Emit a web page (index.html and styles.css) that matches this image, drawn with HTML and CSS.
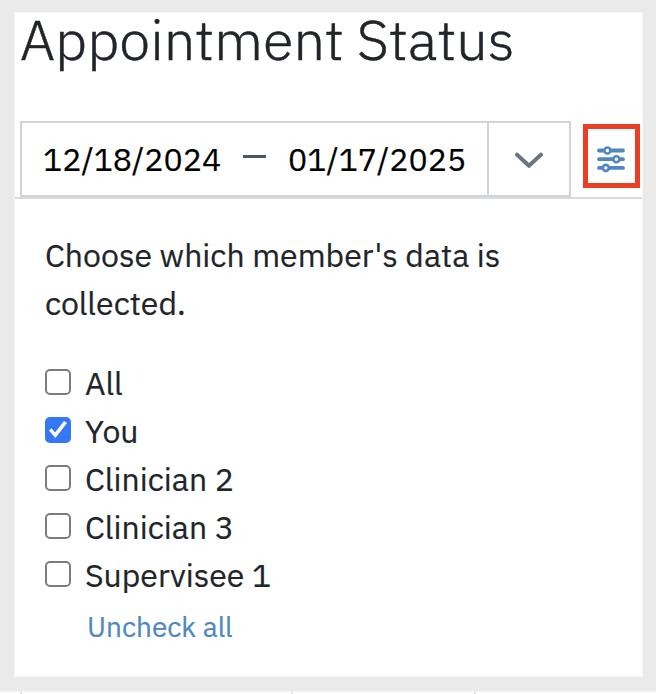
FILE: index.html
```html
<!DOCTYPE html>
<html lang="en">
<head>
  <meta charset="utf-8">
  <title>Appointment Status</title>
  <link rel="stylesheet" href="styles.css">
</head>
<body>
  <div class="page">
    <div class="card">
      <h1 class="title">Appointment Status</h1>

      <div class="toolbar">
        <div class="date-range">
          <div class="dates">
            <span class="date">12/18/2024</span>
            <span class="dash"></span>
            <span class="date">01/17/2025</span>
          </div>
          <button class="toggle" aria-label="Open date picker">
            <svg width="28" height="17" viewBox="0 0 28 17" fill="none" stroke="#6c757d" stroke-width="4" stroke-linecap="round" stroke-linejoin="round">
              <path d="M2 2.6 L14 13.8 L26 2.6"/>
            </svg>
          </button>
        </div>
        <button class="filter" aria-label="Filter members">
          <svg width="28" height="28" viewBox="0 0 28 28" fill="#fff" stroke="#4f88bc" stroke-linecap="round">
            <path d="M2 5.5 H26 M2 14.2 H26 M2 22.9 H26" stroke-width="3.8"/>
            <circle cx="10.4" cy="5.5" r="3" stroke-width="2.6"/>
            <circle cx="19.4" cy="14.2" r="3" stroke-width="2.6"/>
            <circle cx="8.8" cy="22.9" r="3" stroke-width="2.6"/>
          </svg>
        </button>
      </div>

      <div class="members">
        <p class="hint">Choose which member's data is<br>collected.</p>
        <label class="option"><input type="checkbox"><span>All</span></label>
        <label class="option"><input type="checkbox" checked><span>You</span></label>
        <label class="option"><input type="checkbox"><span>Clinician 2</span></label>
        <label class="option"><input type="checkbox"><span>Clinician 3</span></label>
        <label class="option"><input type="checkbox"><span>Supervisee 1</span></label>
        <a class="uncheck">Uncheck all</a>
      </div>
    </div>
  </div>
  <div class="table-edge"><span></span><span></span><span></span></div>
</body>
</html>
```

FILE: styles.css
```css
* {
  margin: 0;
  padding: 0;
  box-sizing: border-box;
}

body {
  height: 694px;
  overflow: hidden;
  background: #fff;
  color: #212529;
  font-family: "IBM Plex Sans", Roboto, sans-serif;
  font-size: 32px;
  line-height: 48px;
  -webkit-text-stroke: 0.2px;
}

.page {
  height: 692px;
  padding: 12px 13px 15px 14px;
  background: #eaeaea;
  border-bottom: 1px solid #f4f4f4;
}

.card {
  height: 665px;
  background: #fff;
  border: 1px solid #f5f5f5;
}

.title {
  height: 108px;
  padding-left: 5px;
  font-size: 56px;
  font-weight: 300;
  line-height: 52px;
  white-space: nowrap;
  -webkit-text-stroke: 0.5px;
}

.toolbar {
  display: flex;
  height: 78px;
  padding-left: 5px;
  border-bottom: 2px solid #d8dadb;
}

.date-range {
  display: flex;
  width: 551px;
  height: 76px;
  border: 2px solid #ced4d9;
}

.dates {
  display: flex;
  align-items: center;
  width: 465px;
  padding-left: 21px;
  color: #000;
}

.date {
  width: 178px;
  white-space: nowrap;
}

.dash {
  width: 23px;
  height: 3px;
  margin: 0 22px 5px;
  background: #4d5760;
}

button {
  display: flex;
  align-items: center;
  justify-content: center;
  background: none;
  border: none;
}

.toggle {
  flex: 1;
  padding-top: 2px;
  border-left: 2px solid #ced4d9;
}

.filter {
  width: 57px;
  height: 64px;
  margin: 3px 0 0 12px;
  padding: 6px 2px 0 0;
  border: 5px solid #ea3f25;
}

.members {
  padding: 32px 0 0 30px;
}

.hint {
  height: 128px;
  white-space: nowrap;
}

.option {
  display: flex;
  height: 48px;
}

.option input {
  appearance: none;
  width: 26px;
  height: 26px;
  margin: 10px 14px 0 0;
  border: 2px solid #7c7c7c;
  border-radius: 5px;
}

.option input:checked {
  background: #3478f6;
  border: none;
}

.option input:checked::before {
  content: "";
  display: block;
  width: 26px;
  height: 26px;
  background: #fff;
  clip-path: polygon(4px 13.5px, 6.5px 11.2px, 10px 15.4px, 19px 4px, 22px 6px, 10.4px 21px);
}

.uncheck {
  display: block;
  padding: 4px 0 0 42px;
  color: #4f88bc;
  font-size: 28px;
}

/* top of the table below the card */
.table-edge {
  display: flex;
  height: 2px;
  padding-left: 20px;
}

.table-edge span {
  width: 2px;
  margin-right: 269px;
  background: #ddd;
}

.table-edge span + span {
  margin-right: 181px;
}

.table-edge span:last-child {
  margin-right: 0;
}
```
